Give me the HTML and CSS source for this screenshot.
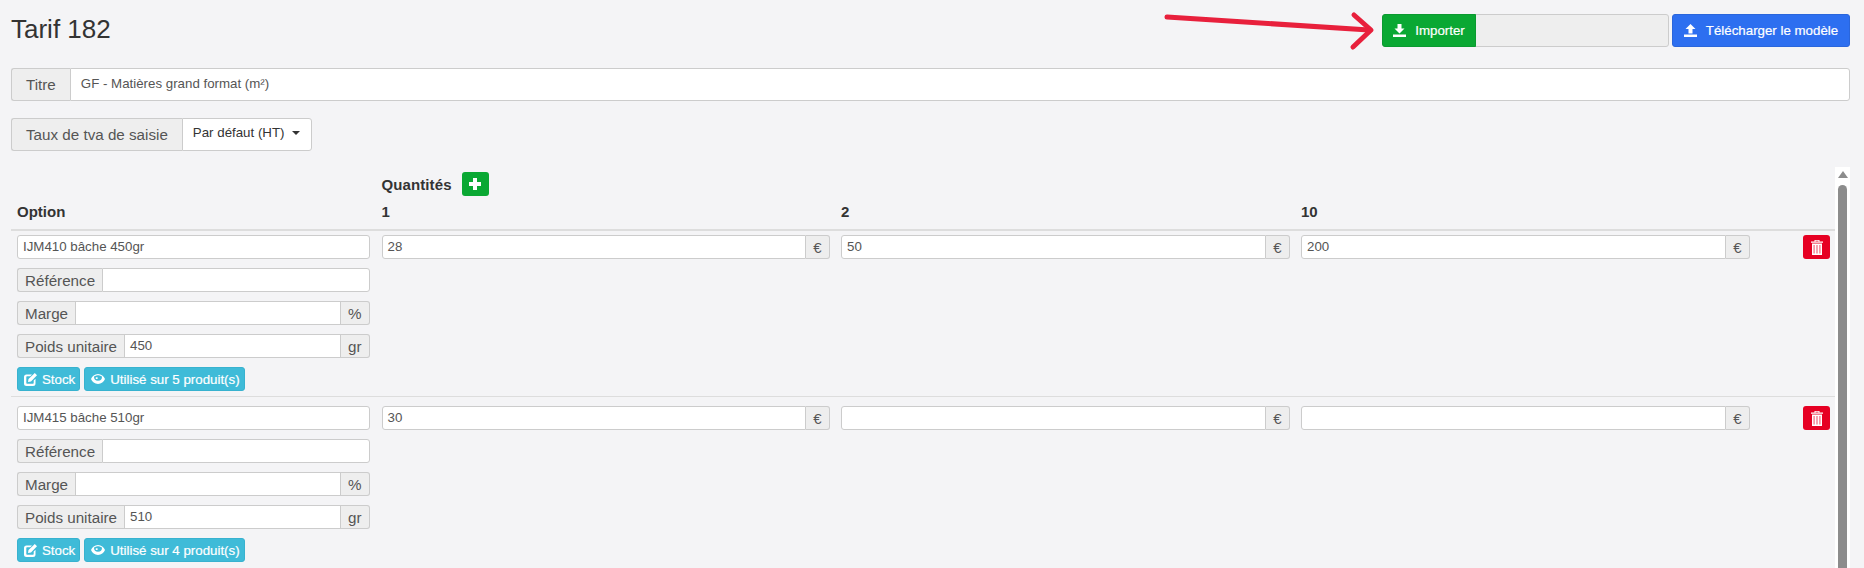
FILE: index.html
```html
<!DOCTYPE html>
<html lang="fr">
<head>
<meta charset="utf-8">
<title>Tarif 182</title>
<link rel="stylesheet" href="styles.css">
</head>
<body>
<div class="page">
  <header class="top">
    <h1 class="title">Tarif 182</h1>
    <div class="actions">
      <div class="import">
        <button class="btn btn-green">
          <svg class="ico" viewBox="0 0 13 13"><path d="M4.500 0h4v4.500h3L6.500 9.500 1.500 4.500h3zM0 10.500h13V13H0z"/></svg>
          Importer
        </button>
        <div class="progress"></div>
      </div>
      <button class="btn btn-blue">
        <svg class="ico" viewBox="0 0 13 13"><path d="M6.500 0l5 5h-3v4.500h-4V5h-3zM0 10.500h13V13H0z"/></svg>
        Télécharger le modèle
      </button>
    </div>
  </header>

  <div class="group group-title">
    <span class="addon addon-lg">Titre</span>
    <div class="field field-lg">GF - Matières grand format (m²)</div>
  </div>

  <div class="group group-tva">
    <span class="addon addon-lg">Taux de tva de saisie</span>
    <div class="select">Par défaut (HT) <span class="caret"></span></div>
  </div>

  <div class="scroller">
    <div class="table">
      <div class="head">
        <div class="h-cell">Option</div>
        <div class="h-cell">
          <div class="qty-title">Quantités
            <button class="btn-plus"><svg viewBox="0 0 12 12"><path d="M4 0h4v4h4v4H8v4H4V8H0V4h4z"/></svg></button>
          </div>
          1
        </div>
        <div class="h-cell">2</div>
        <div class="h-cell">10</div>
        <div class="h-cell"></div>
      </div>

      <div class="row">
        <div class="cell stack">
          <div class="group"><div class="field">IJM410 bâche 450gr</div></div>
          <div class="group"><span class="addon">Référence</span><div class="field"></div></div>
          <div class="group"><span class="addon">Marge</span><div class="field"></div><span class="addon">%</span></div>
          <div class="group"><span class="addon">Poids unitaire</span><div class="field">450</div><span class="addon">gr</span></div>
          <div class="btns">
            <button class="btn-info"><svg class="ico-sm" viewBox="0 0 13 13"><path d="M2.500 1.500H8L6.200 3.300H3a.7.7 0 0 0-.7.7v6a.7.7 0 0 0 .7.7h6a.7.7 0 0 0 .7-.7V7.600L11.500 5.800V10.500A2.500 2.500 0 0 1 9 13H2.500A2.500 2.500 0 0 1 0 10.500V4A2.500 2.500 0 0 1 2.500 1.500zM10.800 0L13 2.200 7 8.500 4 9 4.500 6z"/></svg>Stock</button>
            <button class="btn-info"><svg class="ico-eye" viewBox="0 0 14 10"><path fill-rule="evenodd" d="M7 0c3.300 0 5.800 2.200 7 5-1.200 2.800-3.700 5-7 5S1.200 7.800 0 5C1.200 2.200 3.700 0 7 0zM7 1.200C5.600 1.200 4.100 1.700 3 2.700A4 4 0 1 0 11 2.700C9.900 1.700 8.400 1.200 7 1.200zM4.800 3.200h1.800V5H4.800z"/></svg>Utilisé sur 5 produit(s)</button>
          </div>
        </div>
        <div class="cell cell-price"><div class="group"><div class="field">28</div><span class="addon addon-eur">€</span></div></div>
        <div class="cell cell-price"><div class="group"><div class="field">50</div><span class="addon addon-eur">€</span></div></div>
        <div class="cell cell-price"><div class="group"><div class="field">200</div><span class="addon addon-eur">€</span></div></div>
        <div class="cell cell-del"><button class="btn-del"><svg viewBox="0 0 12 15"><path fill-rule="evenodd" d="M3.500 0h5v1.500H12v1.200H0V1.500h3.500zM4.500 .8v.7h3V.8zM1 3.500h10V15H1zM2.700 5v8.500h.7V5zM5.650 5v8.500h.7V5zM8.600 5v8.500h.7V5z"/></svg></button></div>
      </div>

      <div class="row">
        <div class="cell stack">
          <div class="group"><div class="field">IJM415 bâche 510gr</div></div>
          <div class="group"><span class="addon">Référence</span><div class="field"></div></div>
          <div class="group"><span class="addon">Marge</span><div class="field"></div><span class="addon">%</span></div>
          <div class="group"><span class="addon">Poids unitaire</span><div class="field">510</div><span class="addon">gr</span></div>
          <div class="btns">
            <button class="btn-info"><svg class="ico-sm" viewBox="0 0 13 13"><path d="M2.500 1.500H8L6.200 3.300H3a.7.7 0 0 0-.7.7v6a.7.7 0 0 0 .7.7h6a.7.7 0 0 0 .7-.7V7.600L11.500 5.800V10.500A2.500 2.500 0 0 1 9 13H2.500A2.500 2.500 0 0 1 0 10.500V4A2.500 2.500 0 0 1 2.500 1.500zM10.800 0L13 2.200 7 8.500 4 9 4.500 6z"/></svg>Stock</button>
            <button class="btn-info"><svg class="ico-eye" viewBox="0 0 14 10"><path fill-rule="evenodd" d="M7 0c3.300 0 5.800 2.200 7 5-1.200 2.800-3.700 5-7 5S1.200 7.800 0 5C1.200 2.200 3.700 0 7 0zM7 1.200C5.600 1.200 4.100 1.700 3 2.700A4 4 0 1 0 11 2.700C9.900 1.700 8.400 1.200 7 1.200zM4.800 3.200h1.800V5H4.800z"/></svg>Utilisé sur 4 produit(s)</button>
          </div>
        </div>
        <div class="cell cell-price"><div class="group"><div class="field">30</div><span class="addon addon-eur">€</span></div></div>
        <div class="cell cell-price"><div class="group"><div class="field"></div><span class="addon addon-eur">€</span></div></div>
        <div class="cell cell-price"><div class="group"><div class="field"></div><span class="addon addon-eur">€</span></div></div>
        <div class="cell cell-del"><button class="btn-del"><svg viewBox="0 0 12 15"><path fill-rule="evenodd" d="M3.500 0h5v1.500H12v1.200H0V1.500h3.500zM4.500 .8v.7h3V.8zM1 3.500h10V15H1zM2.700 5v8.500h.7V5zM5.650 5v8.500h.7V5zM8.600 5v8.500h.7V5z"/></svg></button></div>
      </div>
    </div>
    <div class="scrollbar">
      <span class="sb-arrow"></span>
      <span class="sb-thumb"></span>
    </div>
  </div>

  <svg class="arrow" viewBox="0 0 230 50" aria-hidden="true">
    <path d="M3 5 L205 18" fill="none" stroke="#e8203c" stroke-width="5" stroke-linecap="round"/>
    <path d="M190 3 L207 18 L189 35" fill="none" stroke="#e8203c" stroke-width="5" stroke-linecap="round" stroke-linejoin="round"/>
  </svg>
</div>
</body>
</html>
```
FILE: styles.css
```css
* { box-sizing: border-box; }
html, body { margin: 0; height: 568px; overflow: hidden; }
body {
  background: #f4f4f6;
  color: #333;
  font-family: "Liberation Sans", Arial, sans-serif;
  font-size: 13.3px;
}
.page { position: relative; height: 568px; padding: 14px 14px 0 11px; overflow: hidden; }

.top { display: flex; justify-content: space-between; align-items: flex-start; height: 54px; }
.title { margin: 0; font-size: 26px; font-weight: 400; line-height: 30px; color: #333; }
.actions { display: flex; gap: 3px; }
.import { display: flex; width: 287px; height: 33px; background: #eee; border: 1px solid #ccc; border-radius: 3px; }
.btn {
  display: flex; align-items: center; justify-content: center; gap: 9px;
  height: 33px; border: 1px solid transparent; border-radius: 3px;
  color: #fff; font: 13.3px "Liberation Sans", Arial, sans-serif; padding: 0;
  -webkit-text-stroke: .2px #fff;
}
.btn-green { width: 94px; margin: -1px 0 -1px -1px; background: #0aa833; border-color: #0a9a30; border-radius: 3px 0 0 3px; }
.btn-blue { width: 178px; background: #2d6ff0; border-color: #2a66dc; }
.ico { width: 13px; height: 13px; fill: #fff; }
.progress { flex: 1; }

.group { display: flex; height: 24px; }
.field {
  flex: 1; min-width: 0; height: 100%;
  background: #fff; border: 1px solid #ccc; border-radius: 3px;
  padding: 0 5px; line-height: 21px; color: #555; font-size: 13.3px;
  white-space: nowrap;
}
.addon {
  flex: none; display: flex; align-items: center;
  padding: 0 7px; background: #eee; border: 1px solid #ccc; border-radius: 3px;
  color: #555; font-size: 15.2px;
}
.addon:first-child { border-right: 0; border-radius: 3px 0 0 3px; }
.addon:last-child { border-left: 0; border-radius: 0 3px 3px 0; }
.addon:first-child + .field { border-radius: 0 3px 3px 0; }
.field:has(+ .addon) { border-radius: 3px 0 0 3px; }
.addon:first-child + .field:has(+ .addon) { border-radius: 0; }
.addon-eur { width: 24px; justify-content: center; padding: 0; font-size: 15px; }

.group-title, .group-tva { height: 33px; }
.group-title { margin-bottom: 17px; }
.group-tva { width: 301px; margin-bottom: 16px; }
.addon-lg { padding: 0 14px; }
.field-lg { padding: 0 10px; line-height: 29px; border-radius: 0 3px 3px 0; }
.select {
  flex: 1; height: 100%; background: #fff; border: 1px solid #ccc;
  border-radius: 0 3px 3px 0; padding-left: 10px; line-height: 27px; color: #333; font-size: 13.3px;
}
.caret {
  display: inline-block; width: 0; height: 0; margin-left: 4px; vertical-align: middle;
  border-top: 4px solid #333; border-left: 4px solid transparent; border-right: 4px solid transparent;
}

.scroller { display: flex; height: 401px; width: 1839px; overflow: hidden; }
.table { flex: 1; min-width: 0; }
.head, .row { display: grid; grid-template-columns: 364.5px 459.5px 460px 460px 1fr; }
.head {
  height: 64px; border-bottom: 2px solid #ddd;
  font-size: 15px; font-weight: 700; color: #333;
}
.h-cell { align-self: end; padding: 0 6px 7px; line-height: 21px; }
.qty-title { display: flex; align-items: center; gap: 10px; margin-bottom: 5px; height: 24px; letter-spacing: .1px; }
.btn-plus {
  display: flex; align-items: center; justify-content: center;
  width: 27px; height: 24px; padding: 0; background: #0aa833; border: 0; border-radius: 3px;
}
.btn-plus svg { width: 12px; height: 12px; fill: #fff; }

.row { height: 166px; padding-top: 4px; border-bottom: 1px solid #ddd; }
.row + .row { height: 172px; padding-top: 9px; }
.cell { padding: 0 6px; }
.cell-price { padding-right: 5px; }
.stack { display: flex; flex-direction: column; gap: 9px; }
.btns { display: flex; gap: 4px; }
.btn-info {
  display: flex; align-items: center; gap: 5px;
  height: 24px; padding: 0 4px 0 6px; background: #3fbbd8; border: 1px solid #38b2cf; border-radius: 3px;
  color: #fff; font: 13.3px "Liberation Sans", Arial, sans-serif;
  -webkit-text-stroke: .2px #fff;
}
.ico-sm { width: 13px; height: 13px; fill: #fff; }
.ico-eye { width: 14px; height: 10px; fill: #fff; }
.cell-del { display: flex; justify-content: flex-end; padding: 0 5px 0 0; }
.btn-del {
  display: flex; align-items: center; justify-content: center;
  width: 27px; height: 24px; padding: 0; background: #e60023; border: 0; border-radius: 3px;
}
.btn-del svg { width: 12px; height: 15px; fill: #fff; }

.scrollbar { flex: none; width: 15px; background: #fff; display: flex; flex-direction: column; align-items: center; padding-top: 4px; }
.sb-arrow { width: 0; height: 0; border-bottom: 7px solid #8c8c8c; border-left: 5px solid transparent; border-right: 5px solid transparent; margin-bottom: 7px; }
.sb-thumb { flex: 1; width: 9px; background: #8c8c8c; border-radius: 5px 5px 0 0; }

.arrow { position: absolute; left: 1164px; top: 12px; width: 230px; height: 50px; overflow: visible; }
```
